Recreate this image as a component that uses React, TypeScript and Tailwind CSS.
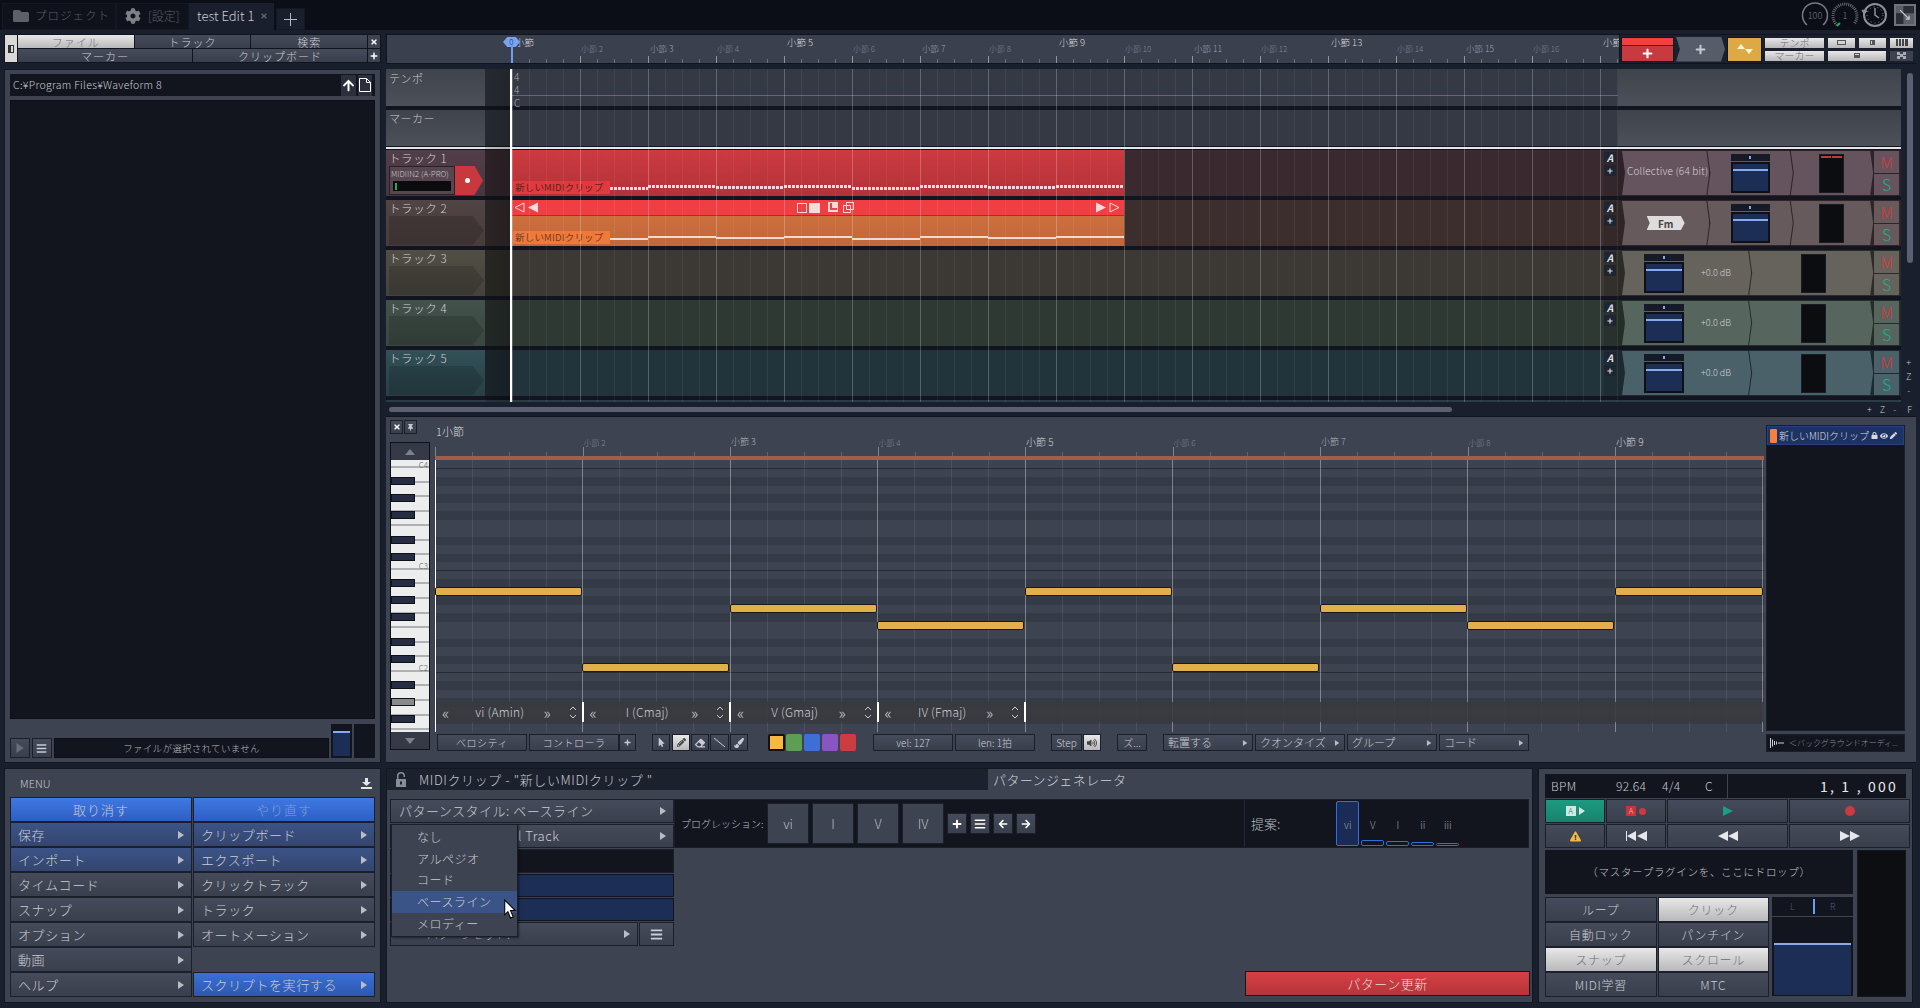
import React from "react";
import {
  FaFolder, FaCog, FaVolumeUp, FaMousePointer, FaPencilAlt, FaEraser, FaPaintBrush,
  FaArrowUp, FaArrowLeft, FaArrowRight, FaPlus, FaBars, FaEye, FaLock, FaPen,
  FaExclamationTriangle, FaTimes, FaThumbtack,
} from "react-icons/fa";

const Tri = ({ className = "fill-[#b9bdc6]" }: { className?: string }) => (
  <svg width="6" height="8" viewBox="0 0 6 8" className={className}><polygon points="0,0 6,4 0,8" /></svg>
);

const Btn = ({ className = "", children }: { className?: string; children?: React.ReactNode }) => (
  <div className={`flex items-center justify-center border border-[#1b1f2a] bg-linear-to-b from-[#454b5a] to-[#3a3f4d] text-[#c9ccd2] ${className}`}>
    {children}
  </div>
);

const on = "!from-[#e8e8e8] !to-[#b9b9bb] !text-[#6b6e75]";

const Pan = () => (
  <div className="flex h-[7px] items-center justify-center bg-[#161a27]"><div className="h-[3px] w-[2px] bg-[#7fa8f5]" /></div>
);

const VolBox = ({ className = "w-[39px]" }: { className?: string }) => (
  <div className={`flex flex-col gap-[1px] ${className}`}>
    <Pan />
    <div className="h-[31px] border-2 border-[#0e1018] bg-[#1c2e55] pt-[5px]"><div className="h-[2px] bg-[#86aaf2]" /></div>
  </div>
);

const Meter = ({ red = false }: { red?: boolean }) => (
  <div className="flex h-[39px] w-[25px] gap-[1px] border border-[#191c26] bg-[#0c0d11] px-[1px] pt-[1px]">
    {red && <><div className="h-[2px] flex-1 bg-[#c9343a]" /><div className="h-[2px] flex-1 bg-[#c9343a]" /></>}
  </div>
);

const sectionClip = "[clip-path:polygon(0_0,calc(100%-3px)_0,100%_50%,calc(100%-3px)_100%,0_100%,3px_50%)]";

const tracks = [
  { n: 1, head: "from-[#523e48] to-[#463640]", shade: "bg-[#33272e]", lane: "bg-[#3a2a30]", end: "bg-[#33262c]", side: "bg-[#2e2228]", plug: "bg-[#65535d]" },
  { n: 2, head: "from-[#514444] to-[#473b3b]", shade: "bg-[#332a2b]", lane: "bg-[#3d2e2e]", end: "bg-[#352828]", side: "bg-[#2f2526]", plug: "bg-[#665a5c]" },
  { n: 3, head: "from-[#514e46] to-[#45423b]", shade: "bg-[#2f2d29]", lane: "bg-[#3c3833]", end: "bg-[#33302b]", side: "bg-[#2d2b27]", plug: "bg-[#65635c]" },
  { n: 4, head: "from-[#43524c] to-[#3a4640]", shade: "bg-[#282f2c]", lane: "bg-[#2e3934]", end: "bg-[#28312d]", side: "bg-[#252d29]", plug: "bg-[#56655e]" },
  { n: 5, head: "from-[#325058] to-[#283f45]", shade: "bg-[#1f2a2f]", lane: "bg-[#22343b]", end: "bg-[#1e2d33]", side: "bg-[#1c2a2f]", plug: "bg-[#4a6169]" },
];

const stepDrops = ["mt-[2px]", "mt-0", "mt-[1px]", "mt-0", "mt-[2px]", "mt-0", "mt-[1px]", "mt-0"];

const ClipLabel = ({ className }: { className: string }) => (
  <div className={`flex h-[13px] w-[97px] shrink-0 items-center pl-[2px] text-[9.5px] font-normal tracking-[0.2px] text-[#5e1f1c] ${className}`}>新しいMIDIクリップ</div>
);

const Clip1 = () => (
  <div className="flex h-full w-[612px] flex-col bg-linear-to-b from-[#cc3a40] to-[#b23238]">
    <div className="flex flex-1 items-end pb-[2px] pl-[1px]">
      <ClipLabel className="bg-[#e03a3f]" />
      <div className="mb-[6px] flex h-[3px] w-[514px] items-start overflow-visible">
        {stepDrops.map((m, i) => (
          <div key={i} className={`h-[3px] shrink-0 bg-[repeating-linear-gradient(90deg,#e8dcdc_0_3px,transparent_3px_4px)] ${i === 0 ? "w-[38px]" : "w-[68px]"} ${m}`} />
        ))}
      </div>
    </div>
  </div>
);

const Clip2 = () => (
  <div className="flex h-full w-[612px] flex-col">
    <div className="flex h-[15px] items-center bg-[#f03e43] px-[2px] text-[#f8dada]">
      <svg width="26" height="11" viewBox="0 0 26 11" fill="none"><polygon points="1,5.5 10,1 10,10" stroke="#f8dada" /><polygon points="14,5.5 24,0.5 24,10.5" fill="#f8dada" /></svg>
      <div className="ml-[257px] flex items-center gap-[2px]">
        <div className="h-[10px] w-[10px] border border-[#f8dada]" />
        <div className="h-[10px] w-[11px] bg-[#f8dada]" />
        <svg width="11" height="11" viewBox="0 0 11 11" className="ml-[6px]" fill="#f8dada"><path d="M0 0h10v10H0zM2 1v7h7V6H4V1z" fillRule="evenodd" /></svg>
        <svg width="11" height="11" viewBox="0 0 11 11" className="ml-[2px]" fill="none" stroke="#f8dada"><rect x="3.5" y="0.5" width="7" height="7" /><rect x="0.5" y="3.5" width="7" height="7" /></svg>
      </div>
      <svg width="26" height="11" viewBox="0 0 26 11" fill="none" className="ml-auto mr-[2px]"><polygon points="2,0.5 12,5.5 2,10.5" fill="#f8dada" /><polygon points="16,1 25,5.5 16,10" stroke="#f8dada" /></svg>
    </div>
    <div className="flex flex-1 items-end border-t border-[#8f3b2a] bg-linear-to-b from-[#cb6f3e] to-[#c3673a] pb-[2px] pl-[1px]">
      <ClipLabel className="bg-[#f0793a] !text-[#74391a]" />
      <div className="mb-[6px] flex h-[2px] w-[514px] items-start">
        {stepDrops.map((m, i) => (
          <div key={i} className={`h-[2px] shrink-0 bg-[#ecdcd0] ${i === 0 ? "w-[38px]" : "w-[68px]"} ${m}`} />
        ))}
      </div>
    </div>
  </div>
);

const TrackRow = ({ t }: { t: (typeof tracks)[number] }) => (
  <div className="flex h-[46px] shrink-0">
    <div className={`flex w-[99px] flex-col bg-linear-to-b pl-[3px] ${t.head}`}>
      <div className="text-[11.5px] leading-[16px] tracking-[0.6px] text-[#cfd0d2]">トラック {t.n}</div>
      {t.n === 1 ? (
        <div className="flex">
          <div className="flex h-[29px] w-[66px] flex-col border border-[#2a2028] bg-[#55464f] px-[1px]">
            <div className="truncate text-[8px] leading-[14px] text-[#c9c5c8]">MIDIIN2 (A-PRO)</div>
            <div className="mx-[2px] flex h-[10px] items-center bg-[#0b0b0d] pl-[2px]"><div className="h-[7px] w-[2px] bg-[#23a862]" /></div>
          </div>
          <div className="flex h-[29px] w-[28px] items-center justify-center bg-[#c8383d] pr-[3px] [clip-path:polygon(0_0,70%_0,100%_50%,70%_100%,0_100%)]">
            <div className="h-[5px] w-[5px] rounded-full bg-white" />
          </div>
        </div>
      ) : (
        <div className="h-[29px] w-[95px] bg-black/15 [clip-path:polygon(0_0,88%_0,100%_50%,88%_100%,0_100%)]" />
      )}
    </div>
    <div className={`w-[27px] ${t.shade}`} />
    <div className={`w-[1092px] ${t.lane}`}>
      {t.n === 1 && <Clip1 />}
      {t.n === 2 && <Clip2 />}
    </div>
    <div className={`flex w-[14px] flex-col gap-[3px] pt-[2px] ${t.end}`}>
      <div className="flex h-[10px] w-[12px] items-center justify-center bg-[#1f2431] text-[10px] font-bold italic text-[#dfe0e3]">A</div>
      <div className="flex h-[11px] w-[12px] items-center justify-center bg-[#1f2431] text-[#dfe0e3]"><FaPlus size={6} /></div>
    </div>
    <div className={`flex w-[283px] items-center pl-[4px] pr-[2px] ${t.side}`}>
      {t.n <= 2 ? (
        <>
          <div className={`flex h-[44px] w-[88px] items-center justify-center ${t.plug} ${sectionClip}`}>
            {t.n === 1 ? (
              <span className="whitespace-nowrap pb-[6px] pl-[4px] text-[10px] tracking-[0.2px] text-[#d8d4d6]">Collective (64 bit)</span>
            ) : (
              <span className="flex h-[14px] w-[38px] items-center justify-center bg-[#dedcdc] text-[10px] font-bold text-[#4a4245] [clip-path:polygon(0_0,90%_0,100%_50%,90%_100%,0_100%,8%_50%)]">Fm</span>
            )}
          </div>
          <div className={`-ml-[2px] flex h-[44px] w-[86px] items-center justify-center ${t.plug} ${sectionClip}`}><VolBox /></div>
          <div className={`-ml-[2px] flex h-[44px] w-[83px] items-center justify-center ${t.plug} ${sectionClip}`}><Meter red={t.n === 1} /></div>
        </>
      ) : (
        <>
          <div className={`flex h-[44px] w-[130px] items-center pl-[22px] ${t.plug} ${sectionClip}`}>
            <VolBox className="w-[40px]" />
            <span className="ml-[17px] whitespace-nowrap text-[9px] text-[#cfd3d2]">+0.0 dB</span>
          </div>
          <div className={`-ml-[2px] flex h-[44px] w-[125px] items-center justify-center pl-[4px] ${t.plug} ${sectionClip}`}><Meter /></div>
        </>
      )}
      <div className="ml-[1px] flex h-[44px] w-[25px] flex-col gap-[1px]">
        <div className={`flex flex-1 items-center justify-center text-[16px] leading-none text-[#d8393c] ${t.plug}`}>M</div>
        <div className={`flex flex-1 items-center justify-center text-[16px] leading-none text-[#1fae8e] ${t.plug}`}>S</div>
      </div>
    </div>
  </div>
);

const Ruler = () => (
  <div className="relative flex h-[30px] w-[1234px] overflow-hidden border border-[#11141d] bg-[#3a404e] pl-[125px]">
    {Array.from({ length: 17 }, (_, i) => {
      const major = i % 4 === 0;
      return (
        <div key={i} className="relative h-full w-[68px] shrink-0">
          <span className={major ? "absolute left-[3px] top-0 whitespace-nowrap text-[9.5px] text-[#d6d8dc]" : i % 2 === 0 ? "absolute left-[2px] top-[7px] whitespace-nowrap text-[8.5px] text-[#9da2ac]" : "absolute left-[1px] top-[8px] whitespace-nowrap text-[8px] text-[#7f8592]"}>
            {i === 0 || i === 16 ? "小節" : `小節 ${i + 1}`}
          </span>
          <div className="absolute bottom-0 left-0 flex h-[7px] items-end">
            <div className="h-[7px] w-[1px] bg-[#8e94a0]" />
            <div className="ml-[16px] h-[4px] w-[1px] bg-[#6a7080]" />
            <div className="ml-[16px] h-[4px] w-[1px] bg-[#6a7080]" />
            <div className="ml-[16px] h-[4px] w-[1px] bg-[#6a7080]" />
          </div>
        </div>
      );
    })}
    <div className="absolute left-[116px] top-[2px] flex h-[10px] w-[17px] items-center justify-center bg-[#78a5f2] text-[8px] leading-none text-[#24304c] [clip-path:polygon(25%_0,75%_0,100%_50%,75%_100%,25%_100%,0_50%)]">0</div>
    <div className="absolute bottom-0 left-[124px] top-[10px] w-[2px] bg-[#6f9cec]" />
  </div>
);

const RightToolbar = () => (
  <div className="flex h-[30px] flex-1 items-center gap-[2px] border-y border-[#11141d] bg-[#20253340] pl-[1px]">
    <div className="flex h-[25px] w-[53px] flex-col border border-[#14161e]">
      <div className="h-[7px] bg-[#f2403f]" />
      <div className="flex flex-1 items-center justify-center border-t border-[#5e1518] bg-[#c63a40] text-white"><FaPlus size={11} /></div>
    </div>
    <div className="flex h-[25px] w-[49px] items-center justify-center bg-[#565c6a] text-[#c7cad0] [clip-path:polygon(0_0,92%_0,100%_50%,92%_100%,0_100%,8%_50%)]"><FaPlus size={11} /></div>
    <div className="flex h-[25px] w-[35px] items-center justify-center border border-[#14161e] bg-[#dca945]">
      <svg width="16" height="10" viewBox="0 0 16 10" fill="#fff3d8"><polygon points="0,5 4,0 8,5" /><polygon points="8,5 12,10 16,5" /></svg>
    </div>
    <div className="grid h-[25px] flex-1 grid-cols-[61px_29px_29px_25px] grid-rows-2 gap-x-[2px] gap-y-[1px] leading-[11px]">
      <Btn className={`text-[10px] ${on}`}>テンポ</Btn>
      <Btn className={on}><div className="h-[5px] w-[9px] border border-[#555]" /></Btn>
      <Btn className={on}><div className="h-[5px] w-[5px] border border-[#555] border-r-[3px]" /></Btn>
      <Btn className={on}><svg width="12" height="7" viewBox="0 0 12 7" fill="#444"><path d="M0 0h2v7H0zM3 0h2v7H3zM6 0h2v7H6zM9 0h3v7H9z" /></svg></Btn>
      <Btn className={`text-[10px] ${on}`}>マーカー</Btn>
      <Btn className={`col-span-2 ${on}`}><div className="h-[5px] w-[6px] border border-[#555] border-b-[3px]" /></Btn>
      <Btn className="!from-[#3c4250] !to-[#3c4250]"><svg width="9" height="7" viewBox="0 0 9 7" fill="#aab"><path d="M0 0h3v3H0zM6 0h3v3H6zM3 2h3v3H3zM0 4h3v3H0zM6 4h3v3H6z" /></svg></Btn>
    </div>
  </div>
);

const gridLines = "bg-[repeating-linear-gradient(90deg,rgba(255,255,255,0.18)_0_1px,transparent_1px_68px),repeating-linear-gradient(90deg,rgba(255,255,255,0.06)_0_1px,transparent_1px_17px)]";

const Timeline = () => (
  <div className="relative flex h-[333px] w-[1515px] flex-col overflow-hidden bg-[#12151f]">
    <div className="flex h-[37px] shrink-0">
      <div className="w-[99px] bg-linear-to-b from-[#3f434c] to-[#4c5059] pl-[3px] text-[11px] leading-[18px] tracking-[0.5px] text-[#c7c9cd]">テンポ</div>
      <div className="w-[27px] bg-[#2d3038]" />
      <div className="relative w-[1106px] bg-[#353943] pl-[2px] pt-[1px] text-[10px] leading-[13px] text-[#a8acb4]">
        <div>4</div><div>4</div><div>C</div>
        <div className="absolute left-0 right-0 top-[26px] h-[1px] bg-[#3a6bc8]" />
      </div>
      <div className="flex-1 bg-linear-to-b from-[#3f434c] to-[#4c5059]" />
    </div>
    <div className="mt-[4px] flex h-[36px] shrink-0">
      <div className="w-[99px] bg-linear-to-b from-[#3f434c] to-[#4c5059] pl-[3px] text-[11px] leading-[16px] tracking-[0.5px] text-[#c7c9cd]">マーカー</div>
      <div className="w-[27px] bg-[#2d3038]" />
      <div className="w-[1106px] bg-[#353943]" />
      <div className="flex-1 bg-linear-to-b from-[#3f434c] to-[#4c5059]" />
    </div>
    <div className="mt-[1px] mb-[1px] h-[2px] shrink-0 bg-[#e4e5e6]" />
    <div className="flex flex-col gap-[4px]">
      {tracks.map((t) => <TrackRow key={t.n} t={t} />)}
      <div className="flex h-[4px] shrink-0 bg-[#2a3d44]" />
    </div>
    <div className={`pointer-events-none absolute bottom-0 left-[126px] top-0 w-[1106px] ${gridLines}`} />
    <div className="pointer-events-none absolute bottom-0 left-[99px] top-0 w-[27px] bg-linear-to-r from-black/15 to-black/25" />
    <div className="pointer-events-none absolute bottom-0 left-[124px] top-0 w-[2px] bg-white" />
  </div>
);

const isBlack = [0, 1, 0, 1, 0, 1, 0, 0, 1, 0, 1, 0];
// B down to C, starting one semitone above the C4 line
const rows = Array.from({ length: 32 }, (_, i) => (i === 0 ? 0 : isBlack[(i - 1) % 12]));

const blackKeys = [17, 34, 51, 76, 93, 119, 136, 153, 178, 195, 221, 238, 255].map((y, i) => ({ y, gray: i === 11 }));

const Piano = () => (
  <div className="flex h-[308px] w-[40px] flex-col border border-[#0f1118] bg-[#0f1118]">
    <div className="flex h-[17px] items-center justify-center bg-[#353a46]"><svg width="10" height="6" viewBox="0 0 10 6" fill="#7b8190"><polygon points="0,6 5,0 10,6" /></svg></div>
    <div className="relative h-[272px] overflow-hidden bg-[#eceded]">
      <div className="absolute left-0 right-0 top-[-94px] flex flex-col">
        {Array.from({ length: 26 }, (_, i) => (
          <div key={i} className="h-[14.57px] shrink-0 border-b-2 border-[#b0b1b4]" />
        ))}
      </div>
      {blackKeys.map((k) => (
        <div key={k.y} className={`absolute left-0 h-[8px] w-[24px] border border-[#0f1118] ${k.gray ? "bg-[#8a8a8a]" : "bg-[#262c42]"}`} style={{ top: k.y }} />
      ))}
      <span className="absolute right-[1px] top-0 text-[8px] leading-[9px] text-[#666]">C4</span>
      <span className="absolute right-[1px] top-[101px] text-[8px] leading-[9px] text-[#666]">C3</span>
      <span className="absolute right-[1px] top-[203px] text-[8px] leading-[9px] text-[#666]">C2</span>
    </div>
    <div className="flex h-[17px] items-center justify-center bg-[#353a46]"><svg width="10" height="6" viewBox="0 0 10 6" fill="#7b8190"><polygon points="0,0 5,6 10,0" /></svg></div>
  </div>
);

const notes = [
  "left-0 top-[127px] w-[147px]",
  "left-[147px] top-[203px] w-[147px]",
  "left-[295px] top-[144px] w-[147px]",
  "left-[442px] top-[161px] w-[147px]",
  "left-[590px] top-[127px] w-[147px]",
  "left-[737px] top-[203px] w-[147px]",
  "left-[885px] top-[144px] w-[147px]",
  "left-[1032px] top-[161px] w-[147px]",
  "left-[1180px] top-[127px] w-[148px]",
];

const chords = ["vi (Amin)", "I (Cmaj)", "V (Gmaj)", "IV (Fmaj)"];

const rollBars = ["", "text-[8px] text-[#7f8592] top-[20px]", "text-[9px] text-[#aeb2ba] top-[18px]", "text-[8px] text-[#7f8592] top-[20px]", "text-[10px] text-[#cfd2d6] top-[17px]", "text-[8px] text-[#7f8592] top-[20px]", "text-[9px] text-[#aeb2ba] top-[18px]", "text-[8px] text-[#7f8592] top-[20px]", "text-[10px] text-[#cfd2d6] top-[17px]"];

const RollRuler = () => (
  <div className="flex h-[39px]">
    {rollBars.map((c, i) => (
      <div key={i} className="relative h-full w-[147.5px] shrink-0">
        {i === 0 ? (
          <span className="absolute left-[1px] top-[6px] text-[11px] text-[#d9dbdf]">1小節</span>
        ) : (
          <span className={`absolute left-[1px] ${c}`}>小節 {i + 1}</span>
        )}
        <div className="absolute bottom-0 left-0 h-[9px] w-[1px] bg-[#7e8491]" />
        <div className="absolute bottom-0 left-[37px] h-[4px] w-[1px] bg-[#5f6573]" />
        <div className="absolute bottom-0 left-[74px] h-[4px] w-[1px] bg-[#5f6573]" />
        <div className="absolute bottom-0 left-[111px] h-[4px] w-[1px] bg-[#5f6573]" />
      </div>
    ))}
  </div>
);

const RollGrid = () => (
  <div className="relative h-[272px] w-[1329px] overflow-hidden bg-[#3d4350]">
    <div className="flex flex-col">
      {rows.map((b, i) => (
        <div key={i} className={`h-[8.5px] shrink-0 ${b ? "bg-[#353a47]" : "bg-[#3d4350]"} ${i % 12 === 0 ? "border-b border-[#262a34]" : ""}`} />
      ))}
    </div>
    <div className="pointer-events-none absolute inset-0 bg-[repeating-linear-gradient(90deg,rgba(255,255,255,0.3)_0_1px,transparent_1px_147.5px),repeating-linear-gradient(90deg,rgba(255,255,255,0.08)_0_1px,transparent_1px_36.875px)]" />
    <div className="absolute bottom-0 left-0 top-0 w-[1px] bg-white" />
    {notes.map((n) => (
      <div key={n} className={`absolute h-[9px] rounded-[2px] border border-[#17191f] bg-[#e2b04a] ${n}`} />
    ))}
    <div className="absolute left-[1px] right-0 top-[242px] flex h-[20px] bg-[#3a3b3f]/90 text-[12px] text-[#c9ccd2]">
      {chords.map((c) => (
        <div key={c} className="flex h-full w-[147.5px] shrink-0 items-center border-r-2 border-white pl-[6px] pr-[3px]">
          <span className="w-[14px] text-[16px] leading-none">«</span>
          <span className="flex-1 text-center tracking-[0.2px]">{c}</span>
          <span className="w-[25px] text-[16px] leading-none">»</span>
          <svg width="8" height="15" viewBox="0 0 8 15" fill="none" stroke="#c9ccd2" className="mr-[2px]"><path d="M1 5l3-3 3 3M1 10l3 3 3-3" /></svg>
        </div>
      ))}
    </div>
  </div>
);

const RollToolbar = () => (
  <div className="mt-[2px] flex h-[17px] items-stretch pl-[2px] text-[10px]">
    <Btn className="w-[90px] tracking-[0.5px]">ベロシティ</Btn>
    <Btn className="ml-[2px] w-[90px] tracking-[0.5px]">コントローラ</Btn>
    <Btn className="w-[17px]"><FaPlus size={7} /></Btn>
    <Btn className="ml-[16px] w-[18px]"><FaMousePointer size={9} /></Btn>
    <Btn className={`ml-[2px] w-[18px] ${on} !text-[#444]`}><FaPencilAlt size={9} /></Btn>
    <Btn className="ml-[1px] w-[18px]"><FaEraser size={10} /></Btn>
    <Btn className="ml-[1px] w-[19px]"><svg width="11" height="9" viewBox="0 0 11 9" stroke="#c9ccd2"><path d="M0 0l11 9" /></svg></Btn>
    <Btn className="ml-[1px] w-[18px]"><FaPaintBrush size={10} /></Btn>
    <div className="ml-[20px] h-[17px] w-[17px] rounded-[2px] border-2 border-[#111] bg-[#f6b83e]" />
    <div className="ml-[1px] h-[17px] w-[16px] rounded-[2px] bg-[#5d9e57]" />
    <div className="ml-[2px] h-[17px] w-[16px] rounded-[2px] bg-[#3f6ed6]" />
    <div className="ml-[2px] h-[17px] w-[16px] rounded-[2px] bg-[#8a55c2]" />
    <div className="ml-[2px] h-[17px] w-[16px] rounded-[2px] bg-[#cc3c41]" />
    <Btn className="ml-[17px] w-[80px]">vel: 127</Btn>
    <Btn className="ml-[2px] w-[80px]">len: 1拍</Btn>
    <Btn className="ml-[16px] w-[31px]">Step</Btn>
    <Btn className={`ml-[1px] w-[18px] ${on} !text-[#444]`}><FaVolumeUp size={10} /></Btn>
    <Btn className="ml-[16px] w-[30px]">ズ...</Btn>
    {["転置する", "クオンタイズ", "グループ", "コード"].map((s) => (
      <Btn key={s} className={`w-[90px] !justify-between px-[4px] text-[11px] ${s === "転置する" ? "ml-[16px]" : "ml-[2px]"}`}><span className="whitespace-nowrap">{s}</span><Tri className="fill-[#b9bdc6] scale-75" /></Btn>
    ))}
  </div>
);

const PianoPanel = () => (
  <div className="flex h-[347px] w-[1530px] border-y border-[#12151f] bg-[#3d4350]">
    <div className="flex w-[49px] shrink-0 flex-col pl-[4px] pt-[3px]">
      <div className="flex gap-[1px]">
        <Btn className="h-[14px] w-[13px]"><FaTimes size={8} className="text-white" /></Btn>
        <Btn className="h-[14px] w-[13px]"><FaThumbtack size={7} /></Btn>
      </div>
      <div className="mt-[8px]"><Piano /></div>
    </div>
    <div className="flex w-[1329px] shrink-0 flex-col">
      <RollRuler />
      <div className="h-[4px] bg-[#a05f48]" />
      <RollGrid />
      <RollToolbar />
    </div>
    <div className="ml-[2px] flex w-[139px] flex-col pt-[8px]">
      <div className="flex h-[306px] flex-col border border-[#1a1e28] bg-[#12151e]">
        <div className="flex h-[19px] items-center gap-[2px] border border-[#27407a] bg-[#1d3364] pl-[2px] text-[10px] text-[#d7d9de]">
          <div className="h-[14px] w-[7px] rounded-[1px] bg-[#f5813c]" />
          <span className="whitespace-nowrap">新しいMIDIクリップ</span>
          <FaLock size={7} /><FaEye size={8} /><FaPen size={7} />
        </div>
      </div>
      <div className="mt-[3px] flex h-[18px] items-center gap-[4px] border border-[#1a1e28] bg-[#12151e] pl-[3px] text-[8px] text-[#8b8f98]">
        <svg width="15" height="10" viewBox="0 0 15 10" fill="#c9ccd2" className="shrink-0"><path d="M0 0h1v10H0zM2 1.5h1v7H2zM4 3h1v4H4zM6 3.5h1v3H6zM8 4.5h6v1H8z" /></svg>
        <span className="whitespace-nowrap">＜バックグラウンドオーディ...</span>
      </div>
    </div>
  </div>
);

const TopBar = () => (
  <div className="flex h-[30px] shrink-0 items-end bg-[#0b0e17] pl-[2px]">
    <div className="flex h-[27px] w-[114px] items-center gap-[6px] border border-[#141823] bg-[#0f121b] pb-[1px] pl-[10px] text-[11.5px] tracking-[1px] text-[#5a5e67]"><FaFolder size={16} className="text-[#5d6068]" />プロジェクト</div>
    <div className="flex h-[27px] w-[73px] items-center gap-[7px] border border-[#141823] bg-[#0f121b] pb-[1px] pl-[8px] text-[12px] text-[#5a5e67]"><FaCog size={16} className="text-[#7d8087]" />[設定]</div>
    <div className="flex h-[27px] w-[85px] items-center bg-[#1a1f2d] pb-[1px] pl-[8px] text-[13px] text-[#c9ccd2]">test Edit 1<span className="ml-[6px] text-[#5d616b]"><FaTimes size={8} /></span></div>
    <div className="ml-[2px] flex h-[22px] w-[29px] items-center justify-center border border-[#141823] bg-[#1a1f2d] text-[#b6b9bf]"><svg width="13" height="13" viewBox="0 0 13 13" fill="currentColor"><path d="M6 0h1v13H6zM0 6h13v1H0z" /></svg></div>
    <div className="ml-auto flex h-full items-center pr-[4px]">
      <svg width="28" height="28" viewBox="0 0 28 28" fill="none" stroke="#767a82" strokeWidth="1.5"><path d="M6 24A12.5 12.5 0 1 1 22 24" /><text x="14" y="18" textAnchor="middle" fontSize="9" fill="#767a82" stroke="none">100</text></svg>
      <svg width="28" height="28" viewBox="0 0 28 28" fill="none" className="ml-[2px]"><path d="M6 24A12 12 0 1 1 23 23" stroke="#676b73" strokeWidth="3" strokeDasharray="1 1" /><path d="M6 25l3-3" stroke="#23a862" strokeWidth="2" /><text x="14" y="18" textAnchor="middle" fontSize="9" fill="#767a82">1</text></svg>
      <svg width="28" height="28" viewBox="0 0 28 28" fill="none" stroke="#8d9097" className="ml-[2px]"><circle cx="14" cy="14" r="11" strokeWidth="2" /><circle cx="14" cy="14" r="8" strokeWidth="1" strokeDasharray="1 3" /><path d="M14 7v7l4 3" strokeWidth="1.5" /><path d="M1 9l2 4 3-3z" fill="#8d9097" /></svg>
      <div className="ml-[5px] flex h-[22px] w-[22px] items-center justify-center border-2 border-[#6f7279] bg-[#2a2d35]"><svg width="22" height="22" viewBox="0 0 22 22"><path d="M0 0h9v9H0zM9 9h13v13H9z" fill="#5b5e66" /><path d="M5 5l11 11M12 16h4v-4" stroke="#c7c9ce" fill="none" strokeWidth="1.5" /></svg></div>
    </div>
  </div>
);

const LeftColumn = () => (
  <div className="flex w-[386px] shrink-0 flex-col pl-[4px] pr-[5px] pt-[4px]">
    <div className="flex h-[29px] border border-[#11141d] bg-[#11141d] text-[11px] leading-[12px] tracking-[1px]">
      <div className="flex w-[12px] items-center justify-center bg-[#d9d9da]"><div className="h-[8px] w-[6px] border border-[#333] border-l-[3px]" /></div>
      <div className="ml-[1px] flex flex-1 flex-col gap-[1px]">
        <div className="flex h-[13px] gap-[1px]">
          <Btn className={`flex-1 border-0 ${on}`}>ファイル</Btn>
          <Btn className="flex-1 border-0">トラック</Btn>
          <Btn className="flex-1 border-0">検索</Btn>
          <div className="flex w-[12px] items-center justify-center bg-[#3d4350] text-white"><FaTimes size={8} /></div>
        </div>
        <div className="flex h-[13px] gap-[1px]">
          <Btn className="flex-1 border-0">マーカー</Btn>
          <Btn className="flex-1 border-0">クリップボード</Btn>
          <div className="flex w-[12px] items-center justify-center bg-[#3d4350] text-white"><FaPlus size={8} /></div>
        </div>
      </div>
    </div>
    <div className="mt-[6px] flex h-[694px] flex-col border border-[#14171f] bg-[#3d4350] px-[5px] pb-[4px] pt-[4px]">
      <div className="flex h-[22px] items-center justify-between bg-[#12151e] pl-[3px] pr-[3px] text-[10.5px] tracking-[0.3px] text-[#c9ccd2]">
        C:¥Program Files¥Waveform 8
        <div className="flex gap-[2px]">
          <div className="flex h-[21px] w-[15px] items-center justify-center bg-[#2b303c] text-white"><FaArrowUp size={13} /></div>
          <div className="flex h-[21px] w-[14px] items-center justify-center bg-[#2b303c]"><svg width="12" height="14" viewBox="0 0 12 14" fill="none" stroke="#fff"><path d="M.5.5h7l4 4v9H.5z" /><path d="M7.5.5v4h4" /></svg></div>
        </div>
      </div>
      <div className="mt-[4px] h-[619px] border border-[#0d0f15] bg-[#12151e]" />
      <div className="mt-[5px] flex h-[34px] items-end gap-[2px]">
        <Btn className="h-[20px] w-[20px]"><Tri className="fill-[#6a6e78] scale-125" /></Btn>
        <Btn className="h-[20px] w-[20px]"><FaBars size={11} /></Btn>
        <div className="flex h-[20px] w-[276px] items-center justify-center border border-[#0d0f15] bg-[#12151e] text-[9.5px] tracking-[0.3px] text-[#b7bac0]">ファイルが選択されていません</div>
        <div className="h-[34px] w-[21px] bg-[#12151e] px-[2px] pt-[7px]"><div className="h-[25px] border-t-2 border-[#86aaf2] bg-[#1c2e55]" /></div>
        <div className="h-[34px] w-[21px] bg-[#12151e]" />
      </div>
    </div>
  </div>
);

const menu: [string, string][] = [
  ["保存|b", "クリップボード|b"],
  ["インポート|b", "エクスポート|b"],
  ["タイムコード|", "クリックトラック|"],
  ["スナップ|", "トラック|"],
  ["オプション|", "オートメーション|"],
  ["動画|", ""],
  ["ヘルプ|", "スクリプトを実行する|s"],
];

const MenuItem = ({ v }: { v: string }) => {
  if (!v) return <div />;
  const [label, kind] = v.split("|");
  const tone =
    kind === "b" ? "!from-[#3b5387] !to-[#34466f] "
    : kind === "s" ? "!from-[#3a70d8] !to-[#2d58ad] "
    : "";
  return (
    <Btn className={`h-[25px] !justify-between pl-[7px] pr-[7px] text-[13px] tracking-[0.6px] ${tone}`}>
      <span>{label}</span><Tri />
    </Btn>
  );
};

const MenuPanel = () => (
  <div className="ml-[4px] flex h-[235px] w-[377px] shrink-0 flex-col border border-[#14171f] bg-[#3d4350] px-[5px]">
    <div className="flex h-[28px] items-center justify-between pl-[10px] pr-[3px] text-[11px] text-[#c4c7cd]">
      MENU
      <svg width="11" height="11" viewBox="0 0 11 11" fill="#e4e5e8"><path d="M4 0h3v4h3L5.5 8 1 4h3zM0 9h11v2H0z" /></svg>
    </div>
    <div className="grid grid-cols-2 gap-x-[1px]">
      <Btn className="h-[25px] !from-[#3f78e2] !to-[#2d5fc4] text-[13px] tracking-[1px]">取り消す</Btn>
      <Btn className="h-[25px] !from-[#3f78e2] !to-[#2d5fc4] text-[13px] tracking-[1px] !text-[#7f9ddb]">やり直す</Btn>
      {menu.flatMap(([a, b]) => [<MenuItem key={a} v={a} />, <MenuItem key={b || "blank"} v={b} />])}
    </div>
  </div>
);

const Dropdown = () => (
  <div className="absolute left-[4px] top-[55px] z-10 flex h-[113px] w-[127px] flex-col border border-[#1a1e28] bg-[#3d4350] py-[1px] text-[12px] tracking-[0.5px] text-[#c9ccd2] shadow-[1px_1px_2px_rgba(0,0,0,0.5)]">
    {["なし", "アルペジオ", "コード", "ベースライン", "メロディー"].map((s) => (
      <div key={s} className={`flex h-[22px] items-center pl-[25px] ${s === "ベースライン" ? "bg-[#3b5488]" : ""}`}>{s}</div>
    ))}
  </div>
);

const suggestions = [
  { s: "vi", bar: "" },
  { s: "V", bar: "h-[6px]" },
  { s: "I", bar: "h-[5px]" },
  { s: "ii", bar: "h-[4px]" },
  { s: "iii", bar: "h-[3px]" },
];

const ClipPanel = () => (
  <div className="relative ml-[5px] flex h-[235px] w-[1147px] shrink-0 flex-col border border-[#14171f] bg-[#3d4350]">
    <div className="flex h-[21px] shrink-0">
      <div className="flex w-[601px] items-center gap-[13px] bg-[#1c212e] pl-[9px] text-[13px] tracking-[0.6px] text-[#c3c6cc]">
        <svg width="10" height="15" viewBox="0 0 10 15" fill="#8a8d95"><path d="M1 7V4a4 4 0 0 1 8 0v1H7.5V4a2.5 2.5 0 0 0-5 0v3zM0 7h10v8H0zM4 9.5v3h2v-3z" fillRule="evenodd" /></svg>
        <span>MIDIクリップ - "新しいMIDIクリップ "</span>
      </div>
      <div className="flex flex-1 items-center pl-[5px] text-[13px] tracking-[0.4px] text-[#d0d3d8]">パターンジェネレータ</div>
    </div>
    <div className="mt-[9px] flex px-[3px]">
      <div className="flex w-[284px] shrink-0 flex-col gap-[1px] text-[13px] tracking-[0.5px]">
        <Btn className="h-[24px] !justify-between pl-[8px] pr-[7px]"><span>パターンスタイル: ベースライン</span><Tri /></Btn>
        <Btn className="h-[24px] !justify-between pl-[127px] pr-[7px]"><span>l Track</span><Tri /></Btn>
        <div className="h-[24px] border border-[#1b1f2a] bg-[#12151e]" />
        <div className="h-[23px] border border-[#12151e] bg-[#1c2e55]" />
        <div className="h-[23px] border border-[#12151e] bg-[#1c2e55]" />
        <div className="flex h-[24px] gap-[1px]">
          <Btn className="flex-1 !justify-between pl-[36px] pr-[7px] text-[11px]"><span>パターンセット:</span><Tri /></Btn>
          <Btn className="w-[35px]"><FaBars size={13} /></Btn>
        </div>
      </div>
      <div className="flex h-[49px] flex-1 border border-[#1a1e28] bg-[#12151e]">
        <div className="flex w-[570px] items-center border-r border-[#23283a] pl-[6px] text-[#b9bcc3]">
          <span className="w-[86px] whitespace-nowrap text-[10px]">プログレッション:</span>
          {["vi", "I", "V", "IV"].map((c) => (
            <div key={c} className="mr-[3px] flex h-[41px] w-[42px] items-center justify-center border border-[#1b1f2a] bg-[#3d4350] text-[13px]">{c}</div>
          ))}
          <div className="flex gap-[3px] text-white">
            <Btn className="h-[21px] w-[20px] !text-white"><FaPlus size={10} /></Btn>
            <Btn className="h-[21px] w-[20px] !text-white"><FaBars size={12} /></Btn>
            <Btn className="h-[21px] w-[20px] !text-white"><FaArrowLeft size={10} /></Btn>
            <Btn className="h-[21px] w-[20px] !text-white"><FaArrowRight size={10} /></Btn>
          </div>
        </div>
        <div className="relative flex flex-1 items-center pl-[6px] text-[13px] text-[#b9bcc3]">
          提案:
          <div className="ml-[56px] flex h-[45px] items-end gap-[2px] pb-0">
            {suggestions.map((g) => (
              <div key={g.s} className="relative flex h-full w-[23px] flex-col items-center justify-end">
                <span className="absolute top-[16px] text-[10px] text-[#9b9fa8]">{g.s}</span>
                <div className={`w-full rounded-[2px] border border-[#2f6fe0] ${g.bar || "h-full bg-[#1a2c56]"}`} />
              </div>
            ))}
          </div>
        </div>
      </div>
    </div>
    <div className="mt-auto mb-[6px] ml-auto mr-[2px] flex h-[25px] w-[285px] items-center justify-center border border-[#14171f] bg-linear-to-b from-[#d53f44] to-[#b6353a] text-[13px] tracking-[0.5px] text-[#e9d8d9]">パターン更新</div>
    <Dropdown />
    <svg width="14" height="20" viewBox="0 0 12 19" className="absolute left-[116px] top-[130px] z-20"><path d="M1 1v14l3-3 2.5 6 2.5-1-2.5-6H11z" fill="#fff" stroke="#000" /></svg>
  </div>
);

const TransportPanel = () => (
  <div className="ml-[5px] flex h-[235px] w-[375px] shrink-0 flex-col border border-[#14171f] bg-[#3d4350] px-[6px] pt-[5px]">
    <div className="flex h-[24px] gap-[1px]">
      <div className="flex w-[182px] items-center bg-[#12151e] pl-[6px] text-[12px] tracking-[0.3px] text-[#c9ccd2]">
        <span className="w-[65px]">BPM</span><span className="w-[46px]">92.64</span><span className="w-[43px]">4/4</span><span>C</span>
      </div>
      <div className="flex flex-1 items-center justify-end bg-[#12151e] pr-[8px] text-[14px] font-normal tracking-[2.2px] text-[#e8e9ec]">1, 1 , 000</div>
    </div>
    <div className="mt-[1px] grid grid-cols-[60px_60px_121px_121px] gap-x-[1px] gap-y-[1px]">
      <Btn className="h-[24px] gap-[3px] !from-[#1d9a80] !to-[#18836d]"><span className="flex h-[10px] w-[10px] items-center justify-center bg-[#cfe8e2] text-[8px] text-[#2b8a76]">A</span><svg width="6" height="8" viewBox="0 0 6 8" fill="#cfe8e2"><polygon points="0,0 6,4 0,8" /></svg></Btn>
      <Btn className="h-[24px] gap-[3px]"><span className="flex h-[10px] w-[10px] items-center justify-center bg-[#c9343a] text-[8px] text-[#eebbbb]">A</span><span className="h-[7px] w-[7px] rounded-full bg-[#cc3a3f]" /></Btn>
      <Btn className="h-[24px]"><svg width="10" height="10" viewBox="0 0 10 10" fill="#1f9d83"><polygon points="0,0 10,5 0,10" /></svg></Btn>
      <Btn className="h-[24px]"><span className="h-[10px] w-[10px] rounded-full bg-[#cc3a3f]" /></Btn>
      <Btn className="h-[24px]"><FaExclamationTriangle size={11} className="text-[#f6b83e]" /></Btn>
      <Btn className="h-[24px]"><svg width="21" height="10" viewBox="0 0 21 10" fill="#e6e7ea"><path d="M0 0h1v10H0zM1 5l9-5v10zM11 5l10-5v10z" /></svg></Btn>
      <Btn className="h-[24px]"><svg width="20" height="10" viewBox="0 0 20 10" fill="#e6e7ea"><path d="M0 5l10-5v10zM10 5l10-5v10z" /></svg></Btn>
      <Btn className="h-[24px]"><svg width="20" height="10" viewBox="0 0 20 10" fill="#e6e7ea"><path d="M0 0l10 5-10 5zM10 0l10 5-10 5z" /></svg></Btn>
    </div>
    <div className="mt-[2px] flex gap-[4px]">
      <div className="flex w-[308px] flex-col">
        <div className="flex h-[44px] items-center justify-center bg-[#12151e] text-[10.5px] tracking-[0.7px] text-[#c3c6cc]">（マスタープラグインを、ここにドロップ）</div>
        <div className="mt-[3px] flex gap-[3px]">
          <div className="grid w-[224px] grid-cols-2 gap-x-[1px] text-[12px] tracking-[0.7px]">
            <Btn className="h-[25px]">ループ</Btn>
            <Btn className={`h-[25px] ${on}`}>クリック</Btn>
            <Btn className="h-[25px]">自動ロック</Btn>
            <Btn className="h-[25px]">パンチイン</Btn>
            <Btn className={`h-[25px] ${on}`}>スナップ</Btn>
            <Btn className={`h-[25px] ${on}`}>スクロール</Btn>
            <Btn className="h-[25px]">MIDI学習</Btn>
            <Btn className="h-[25px]">MTC</Btn>
          </div>
          <div className="flex flex-1 flex-col gap-[1px]">
            <div className="flex h-[19px] items-center bg-[#12151e] text-[9px] text-[#4a6094]">
              <span className="flex-1 pl-[18px]">L</span>
              <div className="h-[15px] w-[2px] bg-[#6f9cec]" />
              <span className="flex-1 pl-[15px]">R</span>
            </div>
            <div className="h-[79px] bg-[#12151e] px-[2px] pb-[1px] pt-[26px]"><div className="h-full border-t-2 border-[#86aaf2] bg-[#1c2e55]" /></div>
          </div>
        </div>
      </div>
      <div className="h-[147px] flex-1 border border-[#14171f] bg-[#0d0e12]" />
    </div>
  </div>
);

export default function App() {
  return (
    <div className="flex h-[1008px] w-[1920px] flex-col overflow-hidden bg-[#1a1f2d] font-['Noto_Sans_CJK_JP','Noto_Sans',sans-serif] font-light">
      <TopBar />
      <div className="flex h-[738px] shrink-0">
        <LeftColumn />
        <div className="flex w-[1534px] flex-col pt-[4px]">
          <div className="flex h-[30px] w-[1530px]"><Ruler /><RightToolbar /></div>
          <div className="mt-[5px] flex">
            <Timeline />
            <div className="relative w-[15px] pl-[6px] pt-[4px]">
              <div className="h-[190px] w-[6px] rounded-full bg-[#596072]" />
              <div className="absolute left-[5px] top-[287px] flex flex-col items-center text-[9px] leading-[14px] text-[#c9ccd2]"><span>+</span><span>Z</span><span>-</span></div>
            </div>
          </div>
          <div className="flex h-[14px] w-[1530px] items-center pl-[3px]">
            <div className="h-[5px] w-[1063px] rounded-full bg-[#596072]" />
            <div className="ml-auto flex gap-[8px] pr-[4px] text-[9px] leading-none text-[#c9ccd2]"><span>+</span><span>Z</span><span>-</span><span className="ml-[3px]">F</span></div>
          </div>
          <PianoPanel />
        </div>
      </div>
      <div className="flex h-[240px]">
        <MenuPanel />
        <ClipPanel />
        <TransportPanel />
      </div>
    </div>
  );
}
